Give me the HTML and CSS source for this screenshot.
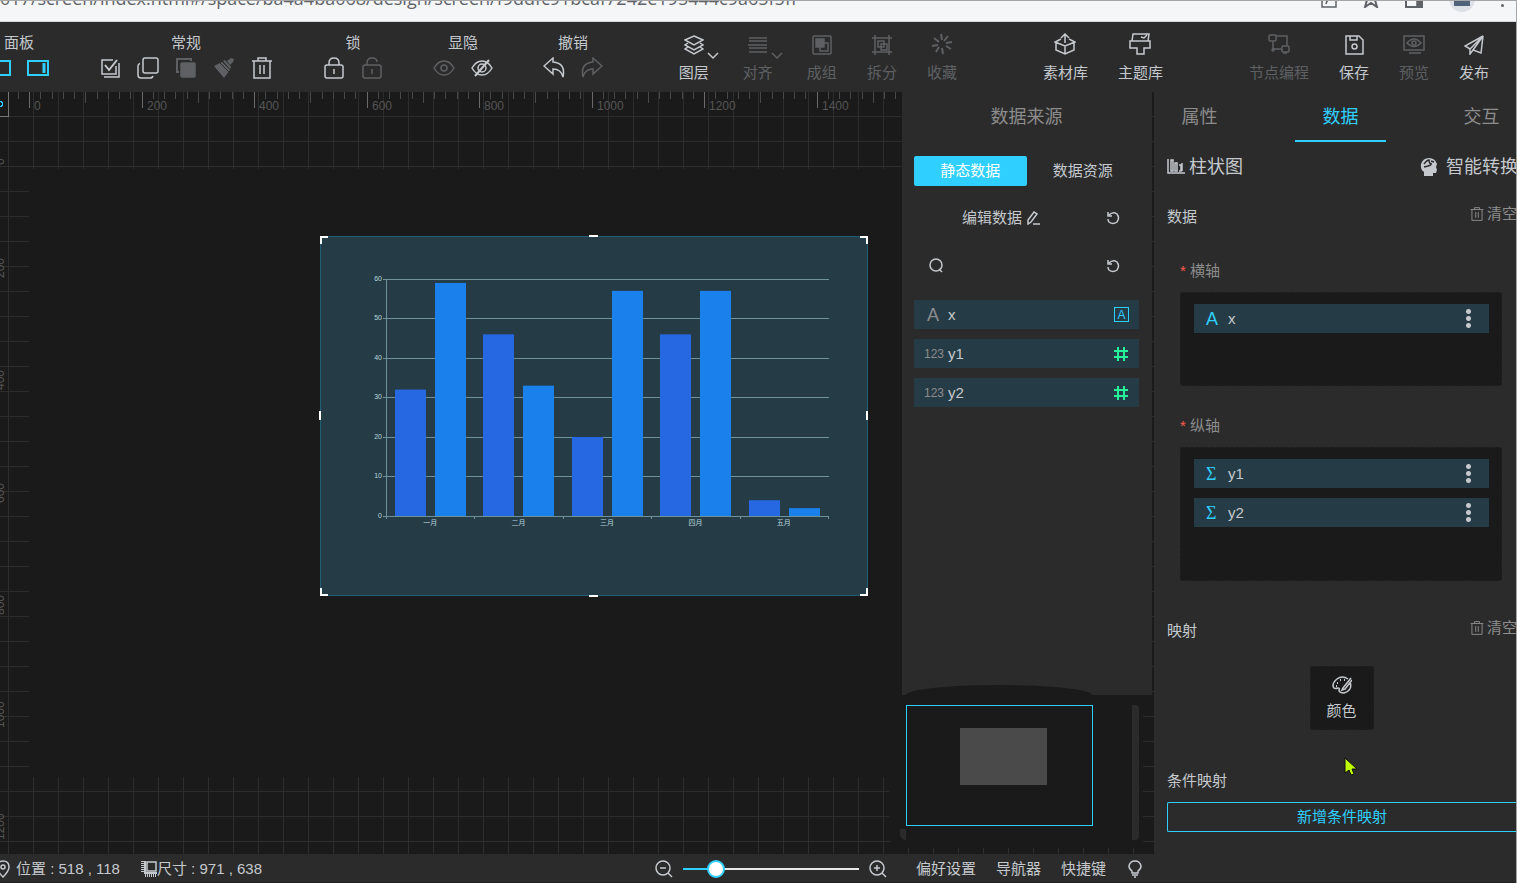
FILE: index.html
```
<!DOCTYPE html>
<html lang="zh-CN">

<head>
    <meta charset="utf-8">
    <title>大屏设计</title>
    <meta name="viewport" content="width=device-width, initial-scale=1">
    <link rel="stylesheet" href="styles.css">
</head>

<body>
    <!-- icon sprite -->
    <svg class="sprite" aria-hidden="true">
        <symbol id="i-panel" viewBox="0 0 22 22"><path d="M1 4h20v14H1z"/></symbol>
        <symbol id="i-panel-right" viewBox="0 0 22 22"><path d="M1 4h20v14H1z"/><path d="M17 6v10" stroke-width="3"/></symbol>
        <symbol id="i-check" viewBox="0 0 22 22"><path d="M14 3H3v14h14V9"/><path d="M5 20h15V6"/><path d="M6 8l4 5 8-10" stroke-width="2"/></symbol>
        <symbol id="i-copy" viewBox="0 0 22 22"><rect x="6" y="1" width="15" height="15" rx="2"/><path d="M3 6.500q-2 .5-2 2.500v9q0 3 3 3h9q2.500 0 3-2"/></symbol>
        <symbol id="i-paste" viewBox="0 0 22 22"><path d="M4 15H2V2h14v2" stroke-width="2"/><rect x="6" y="6" width="14" height="14" rx="1" fill="currentColor"/></symbol>
        <symbol id="i-brush" viewBox="0 0 22 22"><path d="M1 9l8-4 8 8-6 8z M10 4l2-1 6 7-1 2z M14 4l4-3 3 1-1 3-3 3z" fill="currentColor" stroke="none"/><path d="M6 5l10 10" stroke="#2b2b2b" stroke-width="1"/></symbol>
        <symbol id="i-trash" viewBox="0 0 22 22"><path d="M1 4h20M7 4V1h8v3M3 4v17h16V4M9 8v9M13 8v9"/></symbol>
        <symbol id="i-lock" viewBox="0 0 22 22"><rect x="2" y="8" width="18" height="13" rx="2"/><path d="M6 8V6q0-5 5-5t5 5v2M11 12v5"/></symbol>
        <symbol id="i-unlock" viewBox="0 0 22 22"><rect x="2" y="8" width="18" height="13" rx="2"/><path d="M6 8V6q0-5 5-5t5 4M11 12v5"/></symbol>
        <symbol id="i-eye" viewBox="0 0 22 22"><path d="M1 11q4-7 10-7t10 7q-4 7-10 7T1 11z"/><circle cx="11" cy="11" r="3"/></symbol>
        <symbol id="i-eye-off" viewBox="0 0 22 22"><path d="M1 11q4-7 10-7t10 7q-4 7-10 7T1 11z"/><circle cx="11" cy="11" r="4"/><path d="M18 3L4 19" stroke-width="2"/></symbol>
        <symbol id="i-undo" viewBox="0 0 22 22"><path d="M10 1L1 9l9 8v-5q8 0 10 8 3-14-10-15z"/></symbol>
        <symbol id="i-redo" viewBox="0 0 22 22"><path d="M12 1l9 8-9 8v-5q-8 0-10 8Q-1 6 12 5z"/></symbol>
        <symbol id="i-layers" viewBox="0 0 20 20"><path d="M10 1l9 4-9 5-9-5zM4 8l-3 2 9 5 9-5-3-2M4 12l-3 2 9 5 9-5-3-2"/></symbol>
        <symbol id="i-align" viewBox="0 0 20 20"><path d="M1 3h18M1 6h18M0 10h19M1 13h18M1 17h18"/></symbol>
        <symbol id="i-group" viewBox="0 0 20 20"><rect x="1" y="1" width="18" height="18" rx="1"/><rect x="4" y="4" width="8" height="8" fill="currentColor"/><path d="M8 12v4h8V8h-4"/></symbol>
        <symbol id="i-split" viewBox="0 0 20 20"><path d="M3 0v20M17 0v20M0 3h20M0 17h20M6 6h6v6H6zM9 9h6v6H9z"/></symbol>
        <symbol id="i-spark" viewBox="0 0 22 22"><path d="M10 1l1 6M17 3l-4 5M21 9l-6 1M20 16l-5-3M12 21l-1-6M5 19l3-5M1 13l6-1M3 5l5 4" stroke-width="2"/></symbol>
        <symbol id="i-box" viewBox="0 0 22 22"><path d="M7 6L1 9l10 4 10-4-6-3M2 10v7l9 4 9-4v-7M11 13v8M11 10V2M7 5l4-4 4 4"/></symbol>
        <symbol id="i-theme" viewBox="0 0 22 22"><path d="M3 8L4 1h16l-1 7M1 8h20v7h-6v6H8v-6H1zM12 4l3 1 3-3"/></symbol>
        <symbol id="i-node" viewBox="0 0 22 20"><rect x="1" y="1" width="7" height="6" rx="1"/><rect x="14" y="12" width="7" height="6" rx="1"/><path d="M8 2h11v10M5 7v8h9"/><circle cx="5" cy="16" r="1"/><path d="M15 19h4"/></symbol>
        <symbol id="i-save" viewBox="0 0 20 20"><path d="M2 1h13l4 4v14H2zM6 1v4h7V1"/><circle cx="10.500" cy="11.500" r="2.500"/></symbol>
        <symbol id="i-preview" viewBox="0 0 22 20"><path d="M1 2h20v14H1zM6 19h12"/><path d="M4 9q7-8 14 0-7 7-14 0z"/><circle cx="11" cy="9" r="2"/></symbol>
        <symbol id="i-send" viewBox="0 0 20 20"><path d="M19 1L1 11l5 3zM19 1l-2 17-8-3zM6 14v5l3-4"/></symbol>
        <symbol id="i-down" viewBox="0 0 12 8"><path d="M1 1l5 5 5-5"/></symbol>
        <symbol id="i-pencil" viewBox="0 0 14 14"><path d="M2 9l6-8 3 2-6 8-3 2zM7 13h7"/></symbol>
        <symbol id="i-refresh" viewBox="0 0 14 14"><path d="M3 4q4-4 8-1 3 4 0 8-4 3-8 0-1-1-1-3M2 1v4h4"/></symbol>
        <symbol id="i-search" viewBox="0 0 16 16"><circle cx="8" cy="7" r="6"/><path d="M11 11l3 3"/></symbol>
        <symbol id="i-hash" viewBox="0 0 16 16"><path d="M5 1v14M11 1v14M1 5h14M1 11h14" stroke-width="2"/></symbol>
        <symbol id="i-bars" viewBox="0 0 18 16"><path d="M1 0v14h17M4 1h2v11H4zM8 4h2v8H8zM12 6h2v6h-2M15 4v8"/></symbol>
        <symbol id="i-brain" viewBox="0 0 18 20"><path d="M4 19v-4Q0 12 1 7q2-6 8-6t8 6l-1 3 1 3-1 3h-3v3z" fill="currentColor" stroke="none"/><path d="M4 7q3-4 5-4 0 4 3 4M4 10l4-1 3-1M11 4l3 1" stroke="#2b2b2b"/></symbol>
        <symbol id="i-palette" viewBox="0 0 20 18"><path d="M16 3Q10-1 5 3-1 8 2 12q1 1 4 0 2 0 1 2 0 3 5 3 9-3 6-11M19 2l-8 10-1 2 3-1 7-9"/><path d="M5 7h1M8 4h1M12 4h1M4 10h1" stroke-width="2"/></symbol>
        <symbol id="i-pin" viewBox="0 0 14 18"><path d="M7 17Q1 11 1 7q0-6 6-6t6 6q0 4-6 10z"/><circle cx="7" cy="7" r="2"/></symbol>
        <symbol id="i-size" viewBox="0 0 16 16"><path d="M6 1h9v9H6z"/><path d="M2 0v12M4 14h12" stroke-width="4" stroke-dasharray="1 1"/><path d="M4 0v12h12" stroke-width="2"/></symbol>
        <symbol id="i-minus" viewBox="0 0 18 18"><circle cx="8" cy="8" r="7"/><path d="M5 8h6M13 13l4 4"/></symbol>
        <symbol id="i-plus" viewBox="0 0 18 18"><circle cx="8" cy="8" r="7"/><path d="M5 8h6M8 5v6M13 13l4 4"/></symbol>
        <symbol id="i-bulb" viewBox="0 0 14 18"><path d="M4 13v-2Q1 9 1 6q1-5 6-5t6 5q0 3-3 5v2zM4 15h6M6 17h2"/></symbol>
        <symbol id="i-share" viewBox="0 0 16 16"><path d="M1 6v9h14V9M5 12q1-5 6-6"/></symbol>
        <symbol id="i-star" viewBox="0 0 14 16"><path d="M3 0v8L1 15l6-4 6 4-2-7V0" stroke-width="2"/></symbol>
        <symbol id="i-side" viewBox="0 0 18 16"><path d="M1 1h16v13H1z" stroke-width="2"/><path d="M12 6h5v8h-5z" fill="currentColor"/></symbol>
    </svg>

    <header class="address-bar">
        <input class="url" type="text" aria-label="地址" readonly value="017/screen/index.html#/space/ba4a4ba068/design/screen/f9ddfc91bcaf7242e195444c9a65f5ff">
        <div class="browser-icons">
            <svg class="icon s16"><use href="#i-share"/></svg>
            <svg class="icon s16"><use href="#i-star"/></svg>
            <svg class="icon s18"><use href="#i-side"/></svg>
            <span class="avatar"></span>
            <span class="menu-dot"></span>
        </div>
    </header>

    <nav class="toolbar">
        <div class="tool-groups">
            <div class="tool-group">
                <span>面板</span>
                <div class="tool-icons accent">
                    <button aria-label="左侧面板"><svg class="icon s22"><use href="#i-panel"/></svg></button>
                    <button aria-label="右侧面板"><svg class="icon s22"><use href="#i-panel-right"/></svg></button>
                </div>
            </div>
            <div class="tool-group">
                <span>常规</span>
                <div class="tool-icons">
                    <button aria-label="全选"><svg class="icon s22"><use href="#i-check"/></svg></button>
                    <button aria-label="复制"><svg class="icon s22"><use href="#i-copy"/></svg></button>
                    <button aria-label="粘贴" disabled><svg class="icon s22"><use href="#i-paste"/></svg></button>
                    <button aria-label="格式刷" disabled><svg class="icon s22"><use href="#i-brush"/></svg></button>
                    <button aria-label="删除"><svg class="icon s22"><use href="#i-trash"/></svg></button>
                </div>
            </div>
            <div class="tool-group">
                <span>锁</span>
                <div class="tool-icons">
                    <button aria-label="锁定"><svg class="icon s22"><use href="#i-lock"/></svg></button>
                    <button aria-label="解锁" disabled><svg class="icon s22"><use href="#i-unlock"/></svg></button>
                </div>
            </div>
            <div class="tool-group">
                <span>显隐</span>
                <div class="tool-icons">
                    <button aria-label="显示" disabled><svg class="icon s22"><use href="#i-eye"/></svg></button>
                    <button aria-label="隐藏"><svg class="icon s22"><use href="#i-eye-off"/></svg></button>
                </div>
            </div>
            <div class="tool-group">
                <span>撤销</span>
                <div class="tool-icons">
                    <button aria-label="撤销"><svg class="icon s22"><use href="#i-undo"/></svg></button>
                    <button aria-label="重做" disabled><svg class="icon s22"><use href="#i-redo"/></svg></button>
                </div>
            </div>
        </div>

        <div class="actions">
            <div class="action-group">
                <button class="action has-menu"><svg class="icon s20"><use href="#i-layers"/></svg>图层<svg class="icon arrow"><use href="#i-down"/></svg></button>
                <button class="action has-menu" disabled><svg class="icon s20"><use href="#i-align"/></svg>对齐<svg class="icon arrow"><use href="#i-down"/></svg></button>
                <button class="action" disabled><svg class="icon s20"><use href="#i-group"/></svg>成组</button>
                <button class="action" disabled><svg class="icon s20"><use href="#i-split"/></svg>拆分</button>
                <button class="action" disabled><svg class="icon s22"><use href="#i-spark"/></svg>收藏</button>
            </div>
            <div class="action-group">
                <button class="action"><svg class="icon s22"><use href="#i-box"/></svg>素材库</button>
                <button class="action"><svg class="icon s22"><use href="#i-theme"/></svg>主题库</button>
            </div>
            <div class="action-group">
                <button class="action" disabled><svg class="icon s22"><use href="#i-node"/></svg>节点编程</button>
                <button class="action"><svg class="icon s20"><use href="#i-save"/></svg>保存</button>
                <button class="action" disabled><svg class="icon s22"><use href="#i-preview"/></svg>预览</button>
                <button class="action"><svg class="icon s20"><use href="#i-send"/></svg>发布</button>
            </div>
        </div>
    </nav>

    <main class="workspace">
        <section class="canvas">
            <div class="stage"></div>
            <svg class="ruler" id="ruler-x"></svg>
            <svg class="ruler" id="ruler-y"></svg>
            <div class="ruler-corner"></div>
            <svg class="chart" id="chart" viewBox="0 0 548 360"></svg>
        </section>

        <aside class="source">
            <div class="source-panel">
                <h2>数据来源</h2>
                <div class="switch">
                    <button class="active">静态数据</button>
                    <button>数据资源</button>
                </div>
                <div class="source-row">
                    <button class="edit">编辑数据<svg class="icon s14"><use href="#i-pencil"/></svg></button>
                    <button aria-label="刷新"><svg class="icon s14"><use href="#i-refresh"/></svg></button>
                </div>
                <div class="source-row">
                    <label for="field-search"><svg class="icon s16"><use href="#i-search"/></svg></label>
                    <input id="field-search" type="text" aria-label="搜索字段">
                    <button aria-label="重置"><svg class="icon s14"><use href="#i-refresh"/></svg></button>
                </div>
                <ul class="fields">
                    <li><span class="type letter">A</span>x<span class="tag-a">A</span></li>
                    <li><span class="type">123</span>y1<svg class="icon s16 hash"><use href="#i-hash"/></svg></li>
                    <li><span class="type">123</span>y2<svg class="icon s16 hash"><use href="#i-hash"/></svg></li>
                </ul>
            </div>
            <div class="navigator">
                <div class="viewport"><div class="screen"></div></div>
                <div class="nav-bar"></div>
            </div>
        </aside>

        <aside class="props">
            <div class="tabs">
                <button>属性</button>
                <button class="active">数据</button>
                <button>交互</button>
            </div>
            <div class="props-body">
                <div class="chart-type">
                    <svg class="icon s18"><use href="#i-bars"/></svg>
                    <span>柱状图</span>
                    <button class="convert"><svg class="icon s20"><use href="#i-brain"/></svg>智能转换</button>
                </div>
                <div class="section-head">
                    <h3>数据</h3>
                    <button class="clear"><svg class="icon s14"><use href="#i-trash"/></svg>清空</button>
                </div>
                <div class="axis">
                    <h4>横轴</h4>
                    <ul class="drop">
                        <li><span class="mark">A</span>x<button class="more" aria-label="更多"></button></li>
                    </ul>
                </div>
                <div class="axis">
                    <h4>纵轴</h4>
                    <ul class="drop tall">
                        <li><span class="mark sum">Σ</span>y1<button class="more" aria-label="更多"></button></li>
                        <li><span class="mark sum">Σ</span>y2<button class="more" aria-label="更多"></button></li>
                    </ul>
                </div>
                <div class="section-head mapping">
                    <h3>映射</h3>
                    <button class="clear"><svg class="icon s14"><use href="#i-trash"/></svg>清空</button>
                </div>
                <button class="color"><svg class="icon s20"><use href="#i-palette"/></svg>颜色</button>
                <h3>条件映射</h3>
                <button class="add">新增条件映射</button>
            </div>
        </aside>
    </main>

    <footer class="status">
        <div class="info">
            <span><svg class="icon pin"><use href="#i-pin"/></svg>位置 : 518 , 118</span>
            <span><svg class="icon s16"><use href="#i-size"/></svg>尺寸 : 971 , 638</span>
        </div>
        <div class="zoom">
            <button aria-label="缩小"><svg class="icon s18"><use href="#i-minus"/></svg></button>
            <input type="range" min="0" max="100" value="15" aria-label="缩放">
            <button aria-label="放大"><svg class="icon s18"><use href="#i-plus"/></svg></button>
        </div>
        <div class="links">
            <button>偏好设置</button>
            <button>导航器</button>
            <button>快捷键</button>
            <button aria-label="提示"><svg class="icon s18"><use href="#i-bulb"/></svg></button>
        </div>
    </footer>

    <svg class="cursor" viewBox="0 0 14 19"><path d="M1 1v15l4-3 2 5 3-1-2-5h5z"/></svg>

    <script>
        const NS = "http://www.w3.org/2000/svg";

        function add(parent, name, attrs, text) {
            const el = document.createElementNS(NS, name);
            for (const key in attrs) el.setAttribute(key, attrs[key]);
            if (text !== undefined) el.textContent = text;
            parent.appendChild(el);
        }

        // rulers: one tick for every 20 units, a label for every 200
        const step = 11.25;
        const rulerX = document.getElementById("ruler-x");
        const rulerY = document.getElementById("ruler-y");
        for (let i = -1; i < 78; i++) {
            const x = Math.round(29 + i * step);
            const height = i % 10 === 0 ? 16 : i % 5 === 0 ? 11 : 7;
            add(rulerX, "rect", { x, y: 0, width: 1, height, class: i % 10 === 0 ? "tick major" : "tick" });
            if (i % 10 === 0) {
                add(rulerX, "text", { x: x + 5, y: 18 }, i * 20);
            }
        }
        for (let i = 0; i <= 6; i++) {
            const y = Math.round(73 + i * step * 10);
            add(rulerY, "text", { x: 4, y, transform: `rotate(-90 4 ${y})` }, i * 200);
        }

        // bar chart
        const months = ["一月", "二月", "三月", "四月", "五月"];
        const y1 = [32, 46, 20, 46, 4];
        const y2 = [59, 33, 57, 57, 2];
        const chart = document.getElementById("chart");
        const left = 66, right = 508, bottom = 280, unit = 3.95;
        const band = (right - left) / months.length;

        add(chart, "rect", { x: 0.5, y: 0.5, width: 547, height: 359, class: "frame" });
        for (let v = 0; v <= 60; v += 10) {
            const y = Math.floor(bottom - v * unit);
            add(chart, "rect", { x: left - 3, y, width: right - left + 4, height: 1, class: "grid-line" });
            add(chart, "text", { x: left - 4, y: y + 2, "text-anchor": "end" }, v);
        }
        add(chart, "rect", { x: left, y: 43, width: 1, height: 240, class: "grid-line" });
        months.forEach((month, i) => {
            const x = left + i * band;
            add(chart, "rect", { x: Math.round(x + 9), y: bottom - y1[i] * unit, width: 31, height: y1[i] * unit, fill: "#2668e2" });
            add(chart, "rect", { x: Math.round(x + 49), y: bottom - y2[i] * unit, width: 31, height: y2[i] * unit, fill: "#1a80ec" });
            add(chart, "rect", { x: Math.round(x + band), y: bottom, width: 1, height: 3, class: "grid-line" });
            add(chart, "text", { x: x + band / 2, y: bottom + 9, "text-anchor": "middle" }, month);
        });
        // resize handles
        add(chart, "path", { d: "M1 8V1H8M540 1h7v7M547 352v7h-7M8 359H1v-7", class: "handles" });
        add(chart, "path", { d: "M269 0h9M269 360h9M0 175v9M547 175v9", class: "handles" });
    </script>
</body>

</html>
```
FILE: styles.css
```
* {
    box-sizing: border-box;
}

body {
    margin: 0;
    height: 100vh;
    display: flex;
    flex-direction: column;
    overflow: hidden;
    border-right: 1px solid #a5a5a5;
    background-color: #2b2b2b;
    color: #c5c9ce;
    font-family: "Liberation Sans", "Noto Sans CJK SC", sans-serif;
    font-size: 15px;
    line-height: 20px;
}

button {
    padding: 0;
    border: none;
    background: none;
    color: inherit;
    font: inherit;
    white-space: nowrap;
}

button:disabled {
    color: #5e6063;
}

h2, h3, h4, ul {
    margin: 0;
    padding: 0;
    font-weight: normal;
    list-style: none;
}

h3 {
    font-size: 15px;
}

.sprite {
    position: absolute;
    width: 0;
    height: 0;
}

.icon {
    display: block;
    flex: none;
    fill: none;
    stroke: currentColor;
    stroke-width: 1.5;
}

.s14 { width: 14px; height: 14px; }
.s16 { width: 16px; height: 16px; }
.s18 { width: 18px; height: 18px; }
.s20 { width: 20px; height: 20px; }
.s22 { width: 22px; height: 22px; }

/* browser strip */
.address-bar {
    flex: none;
    height: 22px;
    display: flex;
    justify-content: space-between;
    align-items: flex-start;
    overflow: hidden;
    border-top: 1px solid #a5a5a5;
    border-bottom: 1px solid #d5d7da;
    background-color: #f5f6f8;
    color: #5f6368;
}

.url {
    flex: 1;
    height: 24px;
    margin-top: -15px;
    padding: 0;
    border: none;
    outline: none;
    background: none;
    color: inherit;
    font-family: "Open Sans", sans-serif;
    font-size: 18px;
    line-height: 24px;
}

.browser-icons {
    display: flex;
    gap: 26px;
    margin-top: -9px;
    padding-right: 12px;
}

.avatar {
    width: 26px;
    height: 20px;
    border-radius: 0 0 13px 13px;
    background: linear-gradient(#50627a, #50627a) center 9px / 16px 5px no-repeat #dde0e6;
}

.menu-dot {
    width: 3px;
    height: 3px;
    margin-top: 12px;
    border-radius: 50%;
    background-color: #5f6368;
}

/* toolbar */
.toolbar {
    flex: none;
    height: 70px;
    display: flex;
    justify-content: space-between;
    padding: 11px 27px 9px 0;
}

.tool-groups {
    display: flex;
    gap: 34px;
    margin-left: -19px;
}

.tool-group {
    display: flex;
    flex-direction: column;
    align-items: center;
    gap: 4px;
}

.tool-icons {
    display: flex;
}

.tool-icons button {
    width: 38px;
    height: 22px;
    display: flex;
    justify-content: center;
    align-items: center;
}

.accent {
    color: #2fcfff;
}

.accent .icon {
    stroke-width: 2;
}

.actions {
    display: flex;
    gap: 86px;
}

.action-group {
    display: flex;
    gap: 30px;
}

.action {
    position: relative;
    display: flex;
    flex-direction: column;
    align-items: center;
    justify-content: flex-end;
    gap: 8px;
    height: 50px;
}

.has-menu {
    margin-right: 4px;
}

.arrow {
    position: absolute;
    right: -10px;
    top: 19px;
    width: 12px;
    height: 8px;
}

/* workspace */
.workspace {
    flex: 1;
    min-height: 0;
    display: grid;
    grid-template-columns: minmax(0, 1fr) 250px 364px;
    background-color: #1a1a1a;
    background-image:
        linear-gradient(90deg, #2d2d2d 1px, transparent 1px),
        linear-gradient(#2d2d2d 1px, transparent 1px);
    background-size: 25px 25px;
    background-position: 8px 24px;
}

.canvas {
    position: relative;
    display: flex;
    overflow: hidden;
    padding: 77px 0 77px 29px;
}

.stage {
    flex: 1;
    background-color: #1a1a1a;
}

/* soft edge of the navigator */
.canvas::after {
    content: "";
    position: absolute;
    right: 0;
    bottom: 6px;
    width: 13px;
    height: 71px;
    border-radius: 0 0 0 12px;
    background-color: #1a1a1a;
}

.ruler {
    position: absolute;
    left: 0;
    top: 0;
    width: 100%;
    height: 100%;
    fill: #555;
    font-size: 12px;
}

.tick {
    fill: #484848;
}

.major {
    fill: #6a6a6a;
}

.ruler-corner {
    position: absolute;
    left: 0;
    top: 0;
    width: 9px;
    height: 25px;
    border: solid #777;
    border-width: 0 1px 1px 0;
    background: radial-gradient(circle at 0 12px, transparent 2px, #2fcfff 2px, #2fcfff 3px, #1a1a1a 3px);
}

.chart {
    position: absolute;
    left: 320px;
    top: 144px;
    width: 548px;
    height: 360px;
    overflow: visible;
    fill: #b9d7df;
    font-size: 7px;
}

.frame {
    fill: #253b45;
    stroke: #205f76;
}

.grid-line {
    fill: #6e929b;
}

.handles {
    fill: none;
    stroke: #fff;
    stroke-width: 2;
}

/* data source */
.source {
    min-height: 0;
    display: flex;
    flex-direction: column;
}

.source-panel {
    flex: 1;
    padding: 12px 13px 0 12px;
    background-color: #2b2b2b;
}

.source h2 {
    color: #8c8c8c;
    font-size: 18px;
    line-height: 26px;
    text-align: center;
}

.switch {
    display: grid;
    grid-template-columns: 1fr 1fr;
    margin: 26px 0 16px;
}

.switch button {
    height: 30px;
    border-radius: 2px;
}

.switch .active {
    background-color: #2fd0ff;
    color: #fff;
}

.source-row {
    display: flex;
    align-items: center;
    height: 32px;
    margin-bottom: 16px;
    padding: 0 19px 0 14px;
}

.source-row .edit {
    flex: 1;
    display: flex;
    justify-content: center;
    align-items: center;
    gap: 4px;
    padding-right: 32px;
}

.source-row input {
    flex: 1;
    min-width: 0;
    border: none;
    outline: none;
    background: none;
    color: inherit;
}

.fields {
    display: flex;
    flex-direction: column;
    gap: 10px;
    margin-top: 18px;
}

.fields li,
.drop li {
    display: flex;
    align-items: center;
    height: 29px;
    background-color: #253b45;
}

.fields li {
    padding: 0 10px;
}

.type {
    width: 24px;
    color: #8c8c8c;
    font-family: "Liberation Sans Narrow", "Liberation Sans", sans-serif;
    font-size: 12px;
}

.letter {
    padding-left: 3px;
    font-family: "Liberation Sans", sans-serif;
    font-size: 18px;
}

.tag-a {
    width: 15px;
    height: 15px;
    margin-left: auto;
    border: 1px solid #2fcfff;
    color: #2fcfff;
    font-size: 12px;
    line-height: 14px;
    text-align: center;
}

.hash {
    margin-left: auto;
    color: #26f09a;
}

/* navigator */
.navigator {
    position: relative;
    flex: none;
    height: 159px;
    display: flex;
    justify-content: space-between;
    padding: 10px 13px 14px 4px;
    background: linear-gradient(#1a1a1a, #1a1a1a) 0 0 / 241px 153px no-repeat;
}

.navigator::before {
    content: "";
    position: absolute;
    left: 4px;
    top: -10px;
    width: 186px;
    height: 20px;
    border-radius: 50% 50% 0 0;
    background-color: #1a1a1a;
}

.navigator::after {
    content: "";
    position: absolute;
    left: -2px;
    bottom: 14px;
    width: 6px;
    height: 11px;
    border-radius: 0 0 0 6px;
    background-color: #2b2b2b;
}

.viewport {
    position: relative;
    width: 187px;
    height: 121px;
    padding: 22px 45px 40px 53px;
    border: 1px solid #2fcfff;
}

.screen {
    height: 57px;
    background-color: #4a4a4a;
}

.nav-bar {
    width: 7px;
    border-radius: 0 4px 4px 0;
    background-color: #2b2b2b;
}

/* properties */
.props {
    min-width: 0;
    margin-left: 2px;
    overflow: hidden;
    background-color: #2b2b2b;
}

.tabs {
    display: flex;
    gap: 50px;
}

.tabs button {
    flex: none;
    width: 91px;
    height: 50px;
    padding-top: 2px;
    border-bottom: 2px solid transparent;
    color: #8c8c8c;
    font-size: 18px;
}

.tabs .active {
    border-color: #2fcfff;
    color: #2fcfff;
}

.props-body {
    display: flex;
    flex-direction: column;
    padding: 12px 0 0 13px;
}

.chart-type {
    display: flex;
    align-items: center;
    gap: 4px;
    height: 26px;
    font-size: 18px;
}

.convert {
    display: flex;
    align-items: center;
    gap: 7px;
    margin: 0 -2px 0 auto;
}

.section-head {
    display: flex;
    justify-content: space-between;
    height: 20px;
    margin-top: 27px;
}

.clear {
    display: flex;
    align-items: center;
    gap: 3px;
    height: 14px;
    margin-right: -1px;
    color: #8c8c8c;
}

.axis {
    padding: 34px 14px 0 13px;
}

.axis + .axis {
    padding-top: 30px;
}

.axis h4 {
    margin-bottom: 11px;
    color: #8c8c8c;
    font-size: 15px;
}

.axis h4::before {
    content: "* ";
    color: #ff5a4f;
}

.drop {
    display: flex;
    flex-direction: column;
    gap: 10px;
    height: 94px;
    padding: 11px 12px 11px 13px;
    border: 1px dashed #202020;
    border-radius: 3px;
    background-color: #1a1a1a;
}

.drop.tall {
    height: 134px;
}

.drop li {
    padding: 0 18px 0 12px;
}

.mark {
    width: 22px;
    color: #2fcfff;
    font-size: 18px;
}

.sum {
    font-family: "Liberation Serif", serif;
}

.more {
    width: 5px;
    height: 21px;
    margin-left: auto;
    background: radial-gradient(circle, #c5c9ce 2px, transparent 3px) 0 0 / 5px 7px;
}

.mapping {
    margin-top: 40px;
}

.color {
    align-self: center;
    display: flex;
    flex-direction: column;
    align-items: center;
    justify-content: center;
    gap: 6px;
    width: 64px;
    height: 64px;
    margin: 25px 0 41px;
    border: 1px dashed #202020;
    border-radius: 3px;
    background-color: #1a1a1a;
}

.add {
    height: 30px;
    margin-top: 11px;
    border: 1px solid #2fcfff;
    border-right: none;
    border-radius: 2px 0 0 2px;
    color: #2fcfff;
}

/* status bar */
.status {
    flex: none;
    height: 29px;
    display: grid;
    grid-template-columns: minmax(0, 1fr) auto 614px;
    align-items: center;
    padding-top: 1px;
    border-bottom: 1px solid #222;
}

.info {
    display: flex;
    gap: 21px;
    margin-left: -4px;
}

.info span {
    display: flex;
    align-items: center;
}

.pin {
    width: 14px;
    height: 18px;
    margin-right: 6px;
}

.zoom {
    display: flex;
    align-items: center;
    gap: 10px;
    padding-right: 15px;
}

.zoom input {
    width: 176px;
    height: 20px;
    margin: 0;
    appearance: none;
    background: linear-gradient(90deg, #2fcfff 32px, #e8e8e8 32px) center / 100% 2px no-repeat;
}

.zoom input::-webkit-slider-thumb {
    appearance: none;
    width: 18px;
    height: 18px;
    border: 2px solid #2fcfff;
    border-radius: 50%;
    background-color: #fff;
}

.links {
    display: flex;
    align-items: center;
    gap: 20px;
    padding-left: 14px;
}

/* mouse pointer over the page */
.cursor {
    position: absolute;
    left: 1344px;
    top: 757px;
    width: 14px;
    height: 19px;
    fill: #c0ff00;
    stroke: #111;
}
```
